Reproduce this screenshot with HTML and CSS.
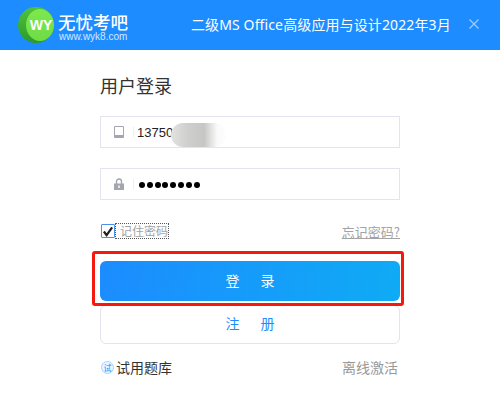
FILE: index.html
```html
<!DOCTYPE html>
<html lang="zh-CN">
<head>
    <meta charset="UTF-8">
    <title>用户登录</title>
    <link rel="stylesheet" href="styles.css">
</head>
<body>

<div class="header">
    <div class="logo">
        <div class="logo-ball">
            <div class="logo-inner"><span class="logo-wy">WY</span></div>
        </div>
        <div class="logo-text">
            <div class="logo-name">无忧考吧</div>
            <div class="logo-url">www.wyk8.com</div>
        </div>
    </div>
    <div class="header-title">二级MS Office高级应用与设计2022年3月</div>
    <svg class="close-icon" width="10" height="10" viewBox="0 0 10 10">
        <path d="M.5 .5 L9.5 9.5 M9.5 .5 L.5 9.5" stroke="#a5cdfb" stroke-width="1.1" fill="none"/>
    </svg>
</div>

<div class="login-box">
    <div class="login-title">用户登录</div>

    <div class="form-field">
        <svg class="field-icon" width="12" height="12" viewBox="0 0 12 12">
            <path d="M1.5 .5 H10.5 V11.5 H1.5 Z" fill="none" stroke="#a3a6ae" stroke-width="1"/>
            <path d="M1.5 9 H10.5 V11.5 H1.5 Z" fill="#a3a6ae"/>
        </svg>
        <span class="field-sep"></span>
        <span class="field-value">13750</span>
        <div class="blur-patch"></div>
    </div>

    <div class="form-field">
        <svg class="field-icon" width="12" height="12" viewBox="0 0 12 12">
            <path d="M3.5 6 V3.5 a2.5 2.5 0 0 1 5 0 V6" fill="none" stroke="#a3a6ae" stroke-width="1.4"/>
            <rect x="1" y="5.5" width="10" height="6.5" fill="#a3a6ae"/>
            <rect x="5.3" y="7.5" width="1.4" height="2.5" fill="#fff"/>
        </svg>
        <span class="field-sep"></span>
        <span class="field-dots">
            <i></i><i></i><i></i><i></i><i></i><i></i><i></i><i></i>
        </span>
    </div>

    <div class="options">
        <label class="remember">
            <span class="check">
                <svg width="12" height="11" viewBox="0 0 13 12">
                    <path d="M2 6 L5 10 L11 1.5" stroke="#222" stroke-width="2.4" fill="none"/>
                </svg>
            </span>
            <span class="remember-text">记住密码</span>
        </label>
        <a class="forgot">忘记密码?</a>
    </div>

    <button class="btn btn-login"><span>登</span><span>录</span></button>
    <button class="btn btn-register"><span>注</span><span>册</span></button>

    <div class="footer-row">
        <div class="trial">
            <span class="trial-badge">试</span>
            <span>试用题库</span>
        </div>
        <a class="offline">离线激活</a>
    </div>
</div>

<div class="highlight"></div>

</body>
</html>
```

FILE: styles.css
```css
html, body {
    height: 400px;
    overflow: hidden;
}
body {
    margin: 0;
    background-color: #fff;
    font-family: "Noto Sans CJK SC", "Liberation Sans", sans-serif;
    position: relative;
}
.header {
    height: 50px;
    background-color: #1c8cff;
    display: flex;
    align-items: center;
    color: #fff;
}
.logo {
    display: flex;
    align-items: center;
    margin-left: 18px;
    width: 173px;
}
.logo-ball {
    width: 36px;
    height: 36px;
    border-radius: 50%;
    background: linear-gradient(180deg, #52c23c 0, #2a9a2a 100%);
    display: flex;
    align-items: center;
    justify-content: flex-end;
    flex-shrink: 0;
}
.logo-inner {
    width: 28px;
    height: 32px;
    border-radius: 50%;
    background: linear-gradient(180deg, #7de84e 0, #6fdc46 100%);
    display: flex;
    align-items: center;
    justify-content: center;
}
.logo-wy {
    font-family: "Liberation Sans", sans-serif;
    font-weight: bold;
    font-size: 14px;
    color: #fff;
    margin-left: 2px;
}
.logo-text {
    margin-left: 4px;
    margin-top: 5px;
}
.logo-name {
    font-size: 17.5px;
    line-height: 18px;
    font-weight: 500;
}
.logo-url {
    font-family: "Liberation Sans", sans-serif;
    font-size: 10px;
    line-height: 11px;
    color: #d5e8ff;
    margin-left: 1px;
}
.header-title {
    font-family: "Noto Sans", "Noto Sans CJK SC", sans-serif;
    font-size: 14px;
    letter-spacing: .12px;
    white-space: nowrap;
    width: 273px;
    margin-top: -2px;
}
.close-icon {
    margin-left: 5px;
    margin-top: -2px;
}
.login-box {
    width: 300px;
    margin-left: 100px;
}
.login-title {
    font-size: 18px;
    line-height: 24px;
    color: #333;
    margin-top: 23px;
    margin-bottom: 19px;
}
.form-field {
    position: relative;
    height: 32px;
    box-sizing: border-box;
    border: 1px solid #e4e3f0;
    margin-bottom: 20px;
    display: flex;
    align-items: center;
    padding-left: 12px;
}
.field-icon {
    flex-shrink: 0;
}
.field-sep {
    width: 1px;
    height: 10px;
    background-color: #eeeef4;
    margin-left: 8px;
    margin-right: 3px;
}
.field-value {
    font-family: "Liberation Sans", sans-serif;
    font-size: 13px;
    color: #222;
}
.blur-patch {
    position: absolute;
    left: 70px;
    top: 6px;
    width: 55px;
    height: 24px;
    border-radius: 12px;
    background: linear-gradient(90deg, #e2e2e0 0, #cfcfcd 30%, #c6c6c4 60%, #fafafa 84%, #fdfdfd 100%);
}
.field-dots {
    display: flex;
    gap: 1.8px;
    margin-left: 2px;
    margin-top: 2px;
}
.field-dots i {
    width: 6px;
    height: 6px;
    border-radius: 50%;
    background-color: #000;
}
.options {
    display: flex;
    justify-content: space-between;
    align-items: center;
    height: 20px;
    margin-top: 21px;
    font-size: 13px;
    color: #a2a2a2;
}
.remember {
    display: flex;
    align-items: center;
}
.check {
    width: 12px;
    height: 12px;
    border: 1px solid #4a90f0;
    border-radius: 1px;
    margin-left: 1px;
    display: flex;
    align-items: center;
    justify-content: center;
}
.remember-text {
    border: 1px dotted #555;
    line-height: 14px;
    font-size: 12px;
    padding-left: 4px;
}
.forgot {
    text-decoration: underline;
}
.btn {
    display: flex;
    align-items: center;
    justify-content: center;
    gap: 21px;
    width: 300px;
    font-family: inherit;
    font-size: 14px;
    padding: 0 0 3px;
    box-sizing: border-box;
}
.btn-login {
    height: 40px;
    margin-top: 20px;
    border: none;
    border-radius: 6px;
    color: #fff;
    background: linear-gradient(100deg, #1c8cff 0, #0fabf5 100%);
}
.btn-register {
    height: 39px;
    margin-top: 4px;
    background-color: #fff;
    border: 1px solid #e4e3f0;
    border-radius: 6px;
    color: #1c8cff;
}
.footer-row {
    display: flex;
    justify-content: space-between;
    align-items: center;
    margin-top: 13px;
    height: 20px;
    font-size: 14px;
    color: #333;
}
.trial {
    display: flex;
    align-items: center;
    gap: 2px;
}
.trial-badge {
    width: 11px;
    height: 11px;
    margin-left: 1px;
    border-radius: 50%;
    border: 1px solid #a5d4fb;
    background-color: #eaf5ff;
    color: #1c8cff;
    font-size: 8px;
    line-height: 11px;
    text-align: center;
}
.offline {
    color: #999;
    margin-right: 2px;
}
.highlight {
    position: absolute;
    left: 92px;
    top: 251px;
    width: 306px;
    height: 49px;
    border: 3px solid #f5180c;
    border-radius: 3px;
}
```
